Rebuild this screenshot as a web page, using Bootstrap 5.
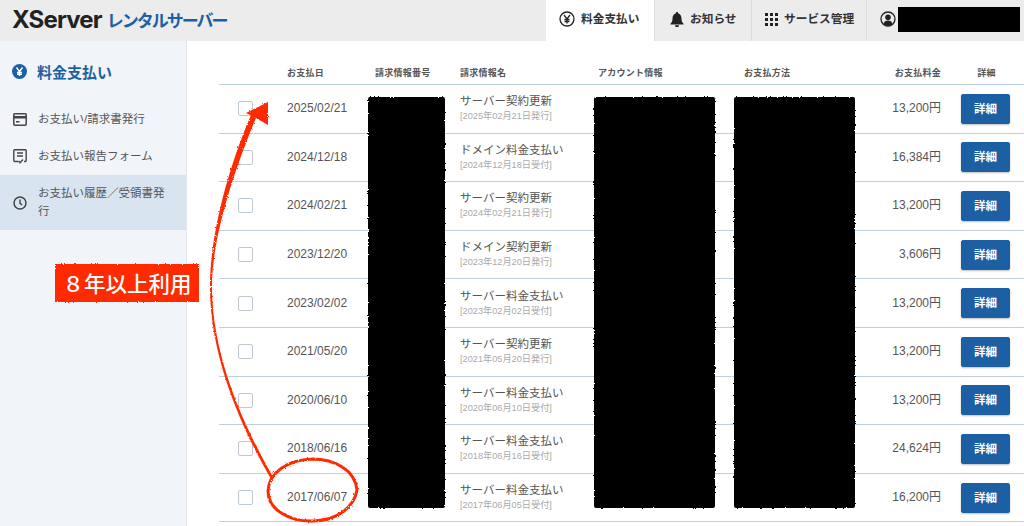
<!DOCTYPE html>
<html lang="ja"><head><meta charset="utf-8"><title>料金支払い</title>
<link href="https://cdn.jsdelivr.net/npm/bootstrap@5.3.0/dist/css/bootstrap.min.css" rel="stylesheet">
<style>
html,body{height:526px;overflow:hidden}
body{font-family:"Liberation Sans","Noto Sans CJK JP",sans-serif;color:#555;background:#fff;position:relative}
.topbar{height:41px;background:#ececec}
.brand-x{font-family:Inter,"Liberation Sans",sans-serif;font-weight:700;font-size:24px;letter-spacing:-.85px;color:#222;line-height:40px}
.brand-j{font-family:"Noto Sans CJK JP",sans-serif;font-weight:700;font-size:17px;color:#1c5fa3;letter-spacing:-2px;margin-left:5px;line-height:40px}
.tabitem{height:41px;font-size:11.7px;font-weight:700;color:#333;border-left:1px solid #dcdcdc;padding-bottom:3px;gap:6px}
.tabitem.current{background:#fff;border-left:0}
.t1{width:108px;padding-left:13px}.t2{width:97px;padding-left:15px}.t3{width:115px;padding-left:13px}.t4{width:158px;padding-left:13px;gap:2px}
.shell{height:485px}
.side{width:187px;flex:none;background:#f1f4f8;border-right:1px solid #e3e6ea;padding-top:18px}
.side-title{font-size:15px;font-weight:700;color:#1c5fa3;padding-left:12px;gap:10px;height:28px;margin-bottom:14px}
.side-link{font-size:11.5px;line-height:17.5px;color:#555;padding:0 14px 0 13px;gap:11px;height:37px}
.side-link.current{background:#d8e5f0;height:55px}
.side-link span{width:131px;flex:none}
.mainarea{padding-top:25px;padding-left:32px;min-width:0}
.paytable{table-layout:fixed;margin:0;width:805px;--bs-table-color:#555;--bs-table-border-color:#bdd0e0}
.paytable th{font-size:9px;font-weight:700;color:#555;height:18.5px;padding:0 0 5px;letter-spacing:.25px;border-bottom:1px solid #bdd0e0;vertical-align:bottom;line-height:12px}
.paytable td{height:48.6px;padding:0;vertical-align:middle;font-size:11.5px;border-bottom:1px solid #bdd0e0;line-height:15px}
.paytable td.dt,.paytable td.amt{font-size:12px}
.paytable .amt,.paytable .amt-head{padding-right:8px}
.sub-note{display:block;font-size:9.2px;color:#aaa;line-height:13px;margin-top:1px}
.boxmark{display:block;width:15px;height:15px;border:1.5px solid #bcc8d4;border-radius:2px;margin-left:19px;background:#fff}
.detail-btn{--bs-btn-bg:#1c5fa3;--bs-btn-border-color:#1c5fa3;--bs-btn-color:#fff;--bs-btn-hover-bg:#1c5fa3;--bs-btn-hover-color:#fff;width:49px;height:30px;padding:0;font-size:11.5px;font-weight:700;line-height:28px;border-radius:2px;margin-left:12px;box-shadow:0 1px 2px rgba(0,0,0,.25);display:block}
.overlay{position:absolute;left:0;top:0;width:1024px;height:526px;pointer-events:none}
.flag{position:absolute;left:55px;top:264px;width:144px;height:38px;color:#fff;font-size:21.5px;font-weight:500;font-family:"Noto Sans CJK JP",sans-serif;line-height:38px;text-align:center;white-space:nowrap}
.userblot{width:122px;height:25px;background:#000}
</style></head>
<body>
<header class="topbar d-flex justify-content-between">
  <div class="ps-2 ms-1 d-flex"><span class="brand-x">XServer</span><span class="brand-j">レンタルサーバー</span></div>
  <nav class="d-flex">
    <div class="tabitem current t1 d-flex align-items-center"><svg width="16" height="16" viewBox="0 0 16 16"><circle cx="8" cy="8" r="7" fill="none" stroke="#222" stroke-width="1.3"/><path d="M5 4l3 4 3-4M8 8v4.500M5.500 8.500h5M5.500 10.500h5" fill="none" stroke="#222" stroke-width="1.300"/></svg>料金支払い</div>
    <div class="tabitem t2 d-flex align-items-center"><svg width="14" height="15" viewBox="0 0 14 15"><path d="M7 0a1 1 0 0 1 1 1.300C10.500 2 11.500 4 11.500 6.500c0 3 .8 4 2 5.200v.8H.5v-.8c1.200-1.200 2-2.200 2-5.200C2.500 4 3.500 2 6 1.300A1 1 0 0 1 7 0zM5 13.300h4a2 2 0 0 1-4 0z" fill="#222"/></svg>お知らせ</div>
    <div class="tabitem t3 d-flex align-items-center"><svg width="13" height="13" viewBox="0 0 13 13" fill="#222"><rect width="3" height="3"/><rect x="5" width="3" height="3"/><rect x="10" width="3" height="3"/><rect y="5" width="3" height="3"/><rect x="5" y="5" width="3" height="3"/><rect x="10" y="5" width="3" height="3"/><rect y="10" width="3" height="3"/><rect x="5" y="10" width="3" height="3"/><rect x="10" y="10" width="3" height="3"/></svg>サービス管理</div>
    <div class="tabitem t4 d-flex align-items-center"><svg width="16" height="16" viewBox="0 0 16 16"><circle cx="8" cy="8" r="7" fill="none" stroke="#222" stroke-width="1.300"/><circle cx="8" cy="6.300" r="2.800" fill="#222"/><path d="M3.500 13c.5-2.500 2.300-3.500 4.500-3.500s4 1 4.500 3.500a7 7 0 0 1-9 0z" fill="#222"/></svg><div class="userblot"></div></div>
  </nav>
</header>
<div class="shell d-flex">
  <aside class="side">
    <div class="side-title d-flex align-items-center"><svg width="15" height="15" viewBox="0 0 15 15" class="mb-1"><circle cx="7.500" cy="7.500" r="7.500" fill="#1c5fa3"/><path d="M4.500 3.500l3 4 3-4M7.500 7.500v4.500M5 8.500h5M5 10.300h5" fill="none" stroke="#fff" stroke-width="1.400"/></svg>料金支払い</div>
    <div class="side-link d-flex align-items-center"><svg width="14" height="13" viewBox="0 0 14 13"><rect x=".8" y=".8" width="12.400" height="11.400" rx="1" fill="none" stroke="#444" stroke-width="1.500"/><rect x="1" y="3" width="12" height="2.500" fill="#444"/><rect x="3" y="8" width="3.500" height="1.500" fill="#444"/></svg><span>お支払い/請求書発行</span></div>
    <div class="side-link d-flex align-items-center"><svg width="14" height="15" viewBox="0 0 14 15"><path d="M5 12.500H1.700a1 1 0 0 1-.9-1V1.700a1 1 0 0 1 .9-1h10.600a1 1 0 0 1 .9 1v9.800a1 1 0 0 1-.9 1H11" fill="none" stroke="#444" stroke-width="1.400"/><path d="M4 4h6M4 7h6" stroke="#444" stroke-width="1.300"/><path d="M5.500 12l1.500 1.800 3-3.300" fill="none" stroke="#444" stroke-width="1.400"/></svg><span>お支払い報告フォーム</span></div>
    <div class="side-link current d-flex align-items-center"><svg width="14" height="14" viewBox="0 0 14 14"><circle cx="7" cy="7" r="6" fill="none" stroke="#444" stroke-width="1.500"/><path d="M7 3.500V7.300l2.200 1.700" fill="none" stroke="#444" stroke-width="1.400"/></svg><span>お支払い履歴／受領書発行</span></div>
  </aside>
  <main class="mainarea flex-grow-1">
    <table class="table paytable">
      <colgroup><col style="width:68px"><col style="width:88px"><col style="width:85px"><col style="width:138px"><col style="width:146px"><col style="width:100px"><col style="width:105px"><col style="width:75px"></colgroup>
      <thead><tr><th></th><th>お支払日</th><th>請求情報番号</th><th>請求情報名</th><th>アカウント情報</th><th>お支払方法</th><th class="amt-head text-end">お支払料金</th><th class="text-center">詳細</th></tr></thead>
      <tbody>
      <tr><td><i class="boxmark"></i></td><td class="dt">2025/02/21</td><td></td><td>サーバー契約更新<small class="sub-note">[2025年02月21日発行]</small></td><td></td><td></td><td class="amt text-end">13,200円</td><td><a class="btn detail-btn" href="#">詳細</a></td></tr>
      <tr><td><i class="boxmark"></i></td><td class="dt">2024/12/18</td><td></td><td>ドメイン料金支払い<small class="sub-note">[2024年12月18日受付]</small></td><td></td><td></td><td class="amt text-end">16,384円</td><td><a class="btn detail-btn" href="#">詳細</a></td></tr>
      <tr><td><i class="boxmark"></i></td><td class="dt">2024/02/21</td><td></td><td>サーバー契約更新<small class="sub-note">[2024年02月21日発行]</small></td><td></td><td></td><td class="amt text-end">13,200円</td><td><a class="btn detail-btn" href="#">詳細</a></td></tr>
      <tr><td><i class="boxmark"></i></td><td class="dt">2023/12/20</td><td></td><td>ドメイン契約更新<small class="sub-note">[2023年12月20日発行]</small></td><td></td><td></td><td class="amt text-end">3,606円</td><td><a class="btn detail-btn" href="#">詳細</a></td></tr>
      <tr><td><i class="boxmark"></i></td><td class="dt">2023/02/02</td><td></td><td>サーバー料金支払い<small class="sub-note">[2023年02月02日受付]</small></td><td></td><td></td><td class="amt text-end">13,200円</td><td><a class="btn detail-btn" href="#">詳細</a></td></tr>
      <tr><td><i class="boxmark"></i></td><td class="dt">2021/05/20</td><td></td><td>サーバー契約更新<small class="sub-note">[2021年05月20日発行]</small></td><td></td><td></td><td class="amt text-end">13,200円</td><td><a class="btn detail-btn" href="#">詳細</a></td></tr>
      <tr><td><i class="boxmark"></i></td><td class="dt">2020/06/10</td><td></td><td>サーバー料金支払い<small class="sub-note">[2020年06月10日受付]</small></td><td></td><td></td><td class="amt text-end">13,200円</td><td><a class="btn detail-btn" href="#">詳細</a></td></tr>
      <tr><td><i class="boxmark"></i></td><td class="dt">2018/06/16</td><td></td><td>サーバー料金支払い<small class="sub-note">[2018年06月16日受付]</small></td><td></td><td></td><td class="amt text-end">24,624円</td><td><a class="btn detail-btn" href="#">詳細</a></td></tr>
      <tr><td><i class="boxmark"></i></td><td class="dt">2017/06/07</td><td></td><td>サーバー料金支払い<small class="sub-note">[2017年06月05日受付]</small></td><td></td><td></td><td class="amt text-end">16,200円</td><td><a class="btn detail-btn" href="#">詳細</a></td></tr>
      </tbody>
    </table>
  </main>
</div>
<svg class="overlay" viewBox="0 0 1024 526">
  <defs><filter id="rough" x="-5%" y="-5%" width="110%" height="110%"><feTurbulence type="fractalNoise" baseFrequency=".6" numOctaves="2" seed="3"/><feDisplacementMap in="SourceGraphic" scale="2.500"/></filter></defs>
  <g filter="url(#rough)">
    <rect x="368" y="97" width="77" height="411" rx="2"/>
    <rect x="594" y="97" width="121" height="411" rx="2"/>
    <rect x="734" y="97" width="121" height="411" rx="2"/>
    <rect x="55" y="264" width="144" height="38" fill="#ff2a00"/>
    <path d="M273 477C246 430 213 360 212 290C211 245 230 180 256 118L251 115C224 178 209 245 210 290C211 362 244 432 271 479Z" fill="#ff2a00"/>
    <path d="M268 102L246 113L256 118L268 125Z" fill="#ff2a00"/>
    <path d="M357 490C355 470 335 459 312 459C288 460 269 472 268 491C268 510 290 522 314 521C338 520 354 507 357 490" fill="none" stroke="#ff2a00" stroke-width="3"/>
  </g>
</svg>
<div class="flag">８年以上利用</div>
</body></html>
